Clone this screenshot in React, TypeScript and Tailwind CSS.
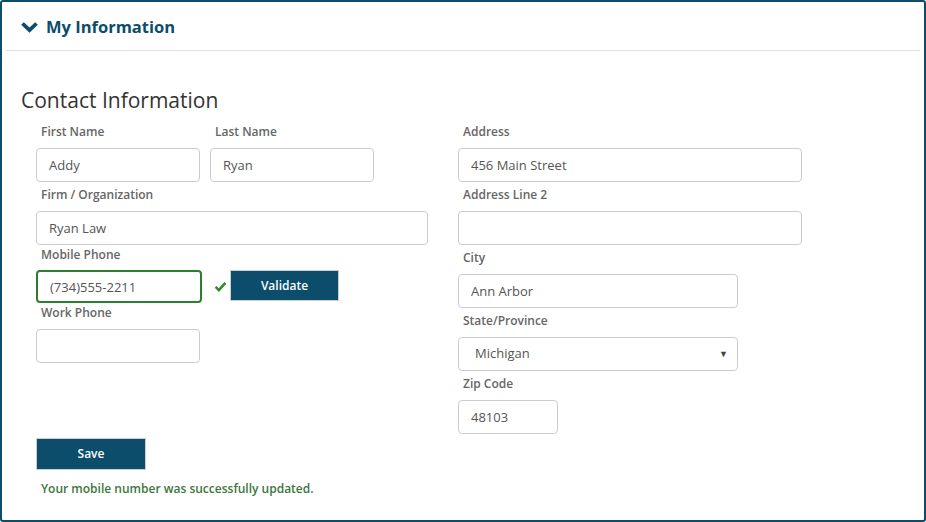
const inputCls =
  'h-[34px] rounded-[4px] border border-[#cccccc] bg-white px-3 text-[13px] text-[#555555] outline-none';

const labelCls = 'h-[20px] pl-[5px] text-[12px] font-semibold leading-[20px] text-[#666666]';

function Field({
  label,
  value,
  width,
}: {
  label: string;
  value?: string;
  width: string;
}) {
  return (
    <div className="flex flex-col">
      <label className={labelCls}>{label}</label>
      <input className={`${inputCls} ${width} mt-[6px]`} defaultValue={value ?? ''} />
    </div>
  );
}

export default function App() {
  return (
    <div
      className="h-[522px] w-[926px] overflow-hidden bg-white"
      style={{ fontFamily: '"Open Sans", "Liberation Sans", sans-serif' }}
    >
      <div className="h-full w-full rounded-[3px] border-2 border-[#0b4d6b] px-[4px]">
        {/* 헤더 */}
        <div className="flex h-[49px] items-center gap-[8px] border-b border-[#dddddd] pl-[15px] pt-[2px]">
          <svg viewBox="0 0 17 11" className="h-[11px] w-[17px]">
            <path d="M1.5 1.5 L8.5 8.2 L15.5 1.5" fill="none" stroke="#0b4d6b" strokeWidth="3.8" />
          </svg>
          <span className="text-[16.5px] font-bold text-[#0b4d6b]">My Information</span>
        </div>

        <div className="pl-[15px] pt-[35px]">
          <h2 className="text-[21px] leading-[28px] text-[#333333]">Contact Information</h2>

          <div className="flex pl-[15px] pt-[8px]">
            {/* 왼쪽 */}
            <div className="flex w-[422px] flex-col">
              <div className="flex gap-[10px]">
                <Field label="First Name" value="Addy" width="w-[164px]" />
                <Field label="Last Name" value="Ryan" width="w-[164px]" />
              </div>
              <div className="mt-[3px]">
                <Field label="Firm / Organization" value="Ryan Law" width="w-[392px]" />
              </div>
              <div className="flex flex-col">
                <label className={labelCls}>Mobile Phone</label>
                <div className="mt-[5px] flex items-center">
                  <input
                    className="h-[33px] w-[166px] rounded-[4px] border-2 border-[#2f7d32] bg-white px-[12px] text-[13px] text-[#555555] outline-none"
                    defaultValue="(734)555-2211"
                  />
                  <svg viewBox="0 0 16 16" className="ml-[12px] h-[13px] w-[13px]">
                    <path
                      d="M2 8.5 L6 12.5 L14 3.5"
                      fill="none"
                      stroke="#2f8a2f"
                      strokeWidth="3"
                    />
                  </svg>
                  <button className="ml-[3px] h-[31px] w-[109px] self-start border border-[#cccccc] bg-[#0b4d6b] text-[12px] font-semibold text-white">
                    Validate
                  </button>
                </div>
              </div>
              <div className="flex flex-col">
                <label className={labelCls}>Work Phone</label>
                <input className={`${inputCls} mt-[6px] w-[164px]`} defaultValue="" />
              </div>
            </div>

            {/* 오른쪽 */}
            <div className="flex flex-col gap-[3px]">
              <Field label="Address" value="456 Main Street" width="w-[344px]" />
              <Field label="Address Line 2" width="w-[344px]" />
              <Field label="City" value="Ann Arbor" width="w-[280px]" />
              <div className="flex flex-col">
                <label className={labelCls}>State/Province</label>
                <div className="relative mt-[6px] w-[280px]">
                  <select
                    className={`${inputCls} w-[280px] appearance-none pl-[16px]`}
                    defaultValue="MI"
                  >
                    <option value="MI">Michigan</option>
                  </select>
                  <span className="pointer-events-none absolute right-[10px] top-[10px] text-[9px] text-[#444444]">
                    ▼
                  </span>
                </div>
              </div>
              <Field label="Zip Code" value="48103" width="w-[100px]" />
            </div>
          </div>

          <div className="pl-[15px] pt-[4px]">
            <button className="h-[32px] w-[110px] border border-[#cccccc] bg-[#0b4d6b] text-[12px] font-semibold text-white">
              Save
            </button>
            <p className="mt-[9px] pl-[5px] text-[12px] font-semibold leading-[20px] text-[#3c763d]">
              Your mobile number was successfully updated.
            </p>
          </div>
        </div>
      </div>
    </div>
  );
}
